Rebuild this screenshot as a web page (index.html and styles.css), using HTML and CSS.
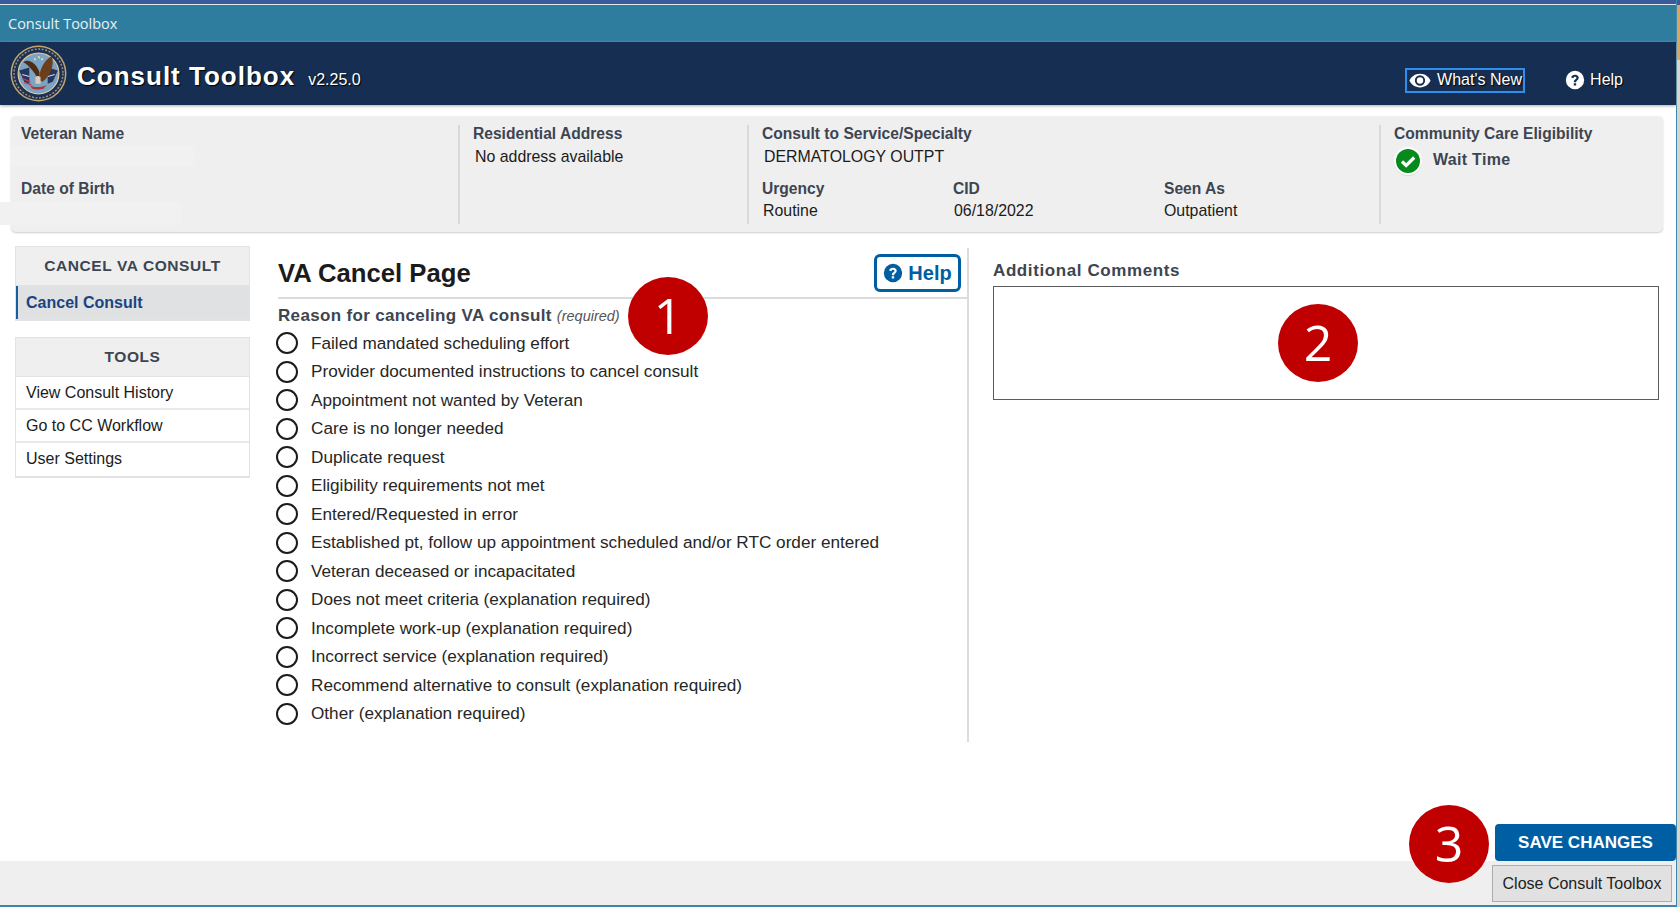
FILE: index.html
```html
<!DOCTYPE html>
<html>
    <head>
        <meta charset="utf-8">
        <meta name="viewport" content="width=device-width, initial-scale=1.0">
        <title>Consult Toolbox</title>
        <link rel="stylesheet" href="styles.css">
    </head>
    <body>
        <div class="shell">
            <div class="window-top"></div>
            <div class="titlebar">Consult Toolbox</div>
            <header class="app-header">
                <svg class="seal" viewBox="0 0 56 56">
                    <circle cx="28" cy="28" r="27.500" fill="#c4a66c"/>
                    <circle cx="28" cy="28" r="26" fill="#1e2f4f"/>
                    <circle cx="28" cy="28" r="24" fill="none" stroke="#8d8f8c" stroke-width="1.500" stroke-dasharray="2 1.500"/>
                    <circle cx="28" cy="28" r="20" fill="#7aa3c4" stroke="#d8c9a4" stroke-width="1.200"/>
                    <path d="M9 25l10 -3v16l-5 -2z" fill="#27365f"/>
                    <path d="M47 25l-10 -3v16l5 -2z" fill="#27365f"/>
                    <path d="M12 33l8 3M14 37l7 2" stroke="#c8384a" stroke-width="1.300"/>
                    <path d="M12 29l7 2M44 29l-7 2" stroke="#d8d8e0" stroke-width="1"/>
                    <path d="M28 34C24 27 19 20 13 17c4 -4 13 0 16 10z" fill="#4f2d14"/>
                    <path d="M28 34c1 -9 5 -19 13 -23c3 8 -1 19 -9 25z" fill="#6b3f1b"/>
                    <path d="M25 32c1 -2 4 -2 5 0v6h-5z" fill="#d8cdb8"/>
                    <path d="M19 39c3 3 13 3 17 0l-3 4c-3 1 -8 1 -11 0z" fill="#b3352f"/>
                    <path d="M24 13l1 2M28 11l1 2M32 13l-1 2" stroke="#f2e6b8" stroke-width="1.400"/>
                </svg>
                <h1 class="app-name">Consult Toolbox</h1>
                <span class="app-version">v2.25.0</span>
                <nav class="header-links">
                    <a class="whats-new">
                        <svg class="eye-icon" viewBox="0 0 24 16">
                            <path fill-rule="evenodd" d="M12 0.5C6.6 0.5 2.4 3.6 0.5 8c1.9 4.4 6.1 7.5 11.5 7.5S21.600 12.400 23.500 8C21.600 3.600 17.400 0.500 12 0.500zM12 13.600A5.600 5.600 0 1 1 12 2.400a5.600 5.600 0 0 1 0 11.200z"/>
                            <circle cx="12" cy="8" r="3.500"/>
                        </svg>
                        What's New
                    </a>
                    <a class="header-help">
                        <svg class="help-icon" viewBox="0 0 24 24">
                            <path fill-rule="evenodd" d="M12 1a11 11 0 1 0 0 22a11 11 0 0 0 0 -22zM13.400 18.600h-2.900v-2.800h2.900zM15.900 11.200c-.7 .9 -1.500 1.400 -2 2c-.4 .5 -.5 1 -.5 1.500h-2.800c0 -1.100 .2 -1.900 .8 -2.600c.6 -.7 1.600 -1.200 2.100 -1.900c.5 -.8 .2 -2.100 -1.400 -2.100c-1.200 0 -1.900 .8 -2.100 1.900l-2.600 -1.100c.5 -1.900 2.200 -3.200 4.700 -3.200c1.700 0 3.100 .7 3.800 1.900c.6 1 .8 2.400 0 3.600z"/>
                        </svg>
                        Help
                    </a>
                </nav>
            </header>

            <section class="info-panel">
                <div class="info-col info-veteran">
                    <div class="info-label">Veteran Name</div>
                    <div class="redacted"></div>
                    <div class="info-label dob-label">Date of Birth</div>
                    <div class="redacted redacted-dob"></div>
                </div>
                <div class="info-col info-address">
                    <div class="info-label">Residential Address</div>
                    <div class="info-value">No address available</div>
                </div>
                <div class="info-col info-consult">
                    <div class="info-label">Consult to Service/Specialty</div>
                    <div class="info-value">DERMATOLOGY OUTPT</div>
                    <div class="consult-grid">
                        <div>
                            <div class="info-label">Urgency</div>
                            <div class="info-value">Routine</div>
                        </div>
                        <div>
                            <div class="info-label">CID</div>
                            <div class="info-value">06/18/2022</div>
                        </div>
                        <div>
                            <div class="info-label">Seen As</div>
                            <div class="info-value seen-value">Outpatient</div>
                        </div>
                    </div>
                </div>
                <div class="info-col info-care">
                    <div class="info-label">Community Care Eligibility</div>
                    <div class="eligibility">
                        <svg class="check-icon" viewBox="0 0 30 30">
                            <circle cx="15" cy="16" r="14" fill="#d9d9d9"/>
                            <circle cx="15" cy="15" r="14" fill="#fff"/>
                            <circle cx="15" cy="15" r="12" fill="#078a1c"/>
                            <path d="M9 15.500l4.200 4l8 -8" fill="none" stroke="#fff" stroke-width="3.200"/>
                        </svg>
                        <span>Wait Time</span>
                    </div>
                </div>
            </section>

            <div class="content">
                <aside class="sidebar">
                    <div class="side-box">
                        <div class="side-title">CANCEL VA CONSULT</div>
                        <a class="side-link active">Cancel Consult</a>
                    </div>
                    <div class="side-box">
                        <div class="side-title">TOOLS</div>
                        <a class="side-link">View Consult History</a>
                        <a class="side-link">Go to CC Workflow</a>
                        <a class="side-link">User Settings</a>
                    </div>
                </aside>

                <main class="cancel-form">
                    <div class="form-head">
                        <h2>VA Cancel Page</h2>
                        <button class="help-btn">
                            <svg class="help-icon" viewBox="0 0 24 24">
                                <path fill-rule="evenodd" d="M12 1a11 11 0 1 0 0 22a11 11 0 0 0 0 -22zM13.400 18.600h-2.900v-2.800h2.900zM15.900 11.200c-.7 .9 -1.500 1.400 -2 2c-.4 .5 -.5 1 -.5 1.500h-2.800c0 -1.100 .2 -1.900 .8 -2.600c.6 -.7 1.600 -1.200 2.100 -1.900c.5 -.8 .2 -2.100 -1.400 -2.100c-1.200 0 -1.900 .8 -2.100 1.900l-2.600 -1.100c.5 -1.900 2.200 -3.200 4.700 -3.200c1.700 0 3.100 .7 3.800 1.900c.6 1 .8 2.400 0 3.600z"/>
                            </svg>
                            Help
                        </button>
                    </div>
                    <div class="reason-title">Reason for canceling VA consult <em>(required)</em></div>
                    <div class="reasons">
                        <label class="reason"><span class="radio"></span>Failed mandated scheduling effort</label>
                        <label class="reason"><span class="radio"></span>Provider documented instructions to cancel consult</label>
                        <label class="reason"><span class="radio"></span>Appointment not wanted by Veteran</label>
                        <label class="reason"><span class="radio"></span>Care is no longer needed</label>
                        <label class="reason"><span class="radio"></span>Duplicate request</label>
                        <label class="reason"><span class="radio"></span>Eligibility requirements not met</label>
                        <label class="reason"><span class="radio"></span>Entered/Requested in error</label>
                        <label class="reason"><span class="radio"></span>Established pt, follow up appointment scheduled and/or RTC order entered</label>
                        <label class="reason"><span class="radio"></span>Veteran deceased or incapacitated</label>
                        <label class="reason"><span class="radio"></span>Does not meet criteria (explanation required)</label>
                        <label class="reason"><span class="radio"></span>Incomplete work-up (explanation required)</label>
                        <label class="reason"><span class="radio"></span>Incorrect service (explanation required)</label>
                        <label class="reason"><span class="radio"></span>Recommend alternative to consult (explanation required)</label>
                        <label class="reason"><span class="radio"></span>Other (explanation required)</label>
                    </div>
                </main>

                <section class="comments">
                    <div class="comments-label">Additional Comments</div>
                    <div class="comments-box"></div>
                </section>
            </div>

            <div class="save-row"><button class="save-btn">SAVE CHANGES</button></div>
            <footer class="footer"><button class="close-btn">Close Consult Toolbox</button></footer>
            <div class="window-bottom"></div>
        </div>
        <div class="window-edge"></div>

        <!-- numbered callouts laid over the screen -->
        <div class="callout callout-1">1</div>
        <div class="callout callout-2">2</div>
        <div class="callout callout-3">3</div>
    </body>
</html>
```

FILE: styles.css
```css
*{
    box-sizing: border-box;
}
html, body{
    height: 100%;
}
body{
    margin: 0;
    display: flex;
    overflow: hidden;
    background: #fff;
    font-family: "Liberation Sans", Arial, sans-serif;
    color: #1b1b1b;
}
.shell{
    width: 1677px;
    height: 907px;
    display: flex;
    flex-direction: column;
    border-right: 1px solid #3f86a8;
}
.window-edge{
    flex: 1;
    background: linear-gradient(#3a5a9b 0 5px, #d9a566 5px 60px, #d6d6d0 60px);
}
.window-top{
    height: 5px;
    background: #3a5a9b;
    border-bottom: 1px solid #dfe6ee;
}
.window-bottom{
    height: 2px;
    margin-top: auto;
    background: #3f86a8;
}

/* title + header */
.titlebar{
    height: 37px;
    line-height: 37px;
    padding-left: 8px;
    background: #2e7d9e;
    color: #e8f1f5;
    font-family: "Open Sans", sans-serif;
    font-size: 14.500px;
}
.app-header{
    height: 63px;
    display: flex;
    align-items: center;
    padding-left: 10px;
    background: #162e51;
    color: #fff;
    box-shadow: 0 1px 3px #aaa;
}
.seal{
    width: 57px;
    height: 57px;
    margin-right: 10px;
}
.app-name{
    margin: 6px 13px 0 0;
    font-size: 26px;
    font-weight: bold;
    letter-spacing: 1px;
    text-shadow: 1px 1px 1px #000;
}
.app-version{
    margin-top: 13px;
    font-size: 16px;
    text-shadow: 1px 1px 1px #000;
}
.header-links{
    margin-left: auto;
    display: flex;
    align-items: center;
    gap: 40px;
    padding-right: 53px;
    padding-top: 14px;
    font-size: 16px;
}
.header-links a{
    display: flex;
    align-items: center;
    text-shadow: 1px 1px 1px #000;
}
.whats-new{
    width: 120px;
    height: 25px;
    padding-left: 2px;
    padding-bottom: 1px;
    gap: 6px;
    border: 2px solid #2e8fee;
    white-space: nowrap;
}
.eye-icon{
    width: 22px;
    height: 15px;
    fill: #fff;
}
.help-icon{
    width: 20px;
    height: 20px;
    fill: #fff;
}
.header-help{
    gap: 5px;
    margin-bottom: 1px;
}

/* veteran info */
.info-panel{
    height: 116px;
    margin: 11px 13px 0 11px;
    padding: 9px 0 8px;
    display: flex;
    background: #efefef;
    border-radius: 5px;
    box-shadow: 0 1px 2px #ccc;
    font-size: 15px;
}
.info-col{
    padding-left: 13px;
    border-left: 2px solid #d9d9d9;
}
.info-veteran{
    width: 447px;
    padding-left: 10px;
    border-left: 0;
}
.info-address{
    width: 289px;
}
.info-consult{
    width: 632px;
}
.info-care{
    flex: 1;
}
.info-label{
    line-height: 18px;
    font-size: 15.600px;
    font-weight: bold;
    color: #3d4551;
    white-space: nowrap;
}
.info-value{
    margin-top: 5px;
    padding-left: 2px;
    line-height: 18px;
    font-size: 15.900px;
    color: #1b1b1b;
}
.consult-grid .info-value{
    margin-top: 4px;
    padding-left: 1px;
}
.consult-grid .seen-value{
    padding-left: 0;
}
.redacted{
    width: 184px;
    height: 20px;
    margin: 3px 0 0 -10px;
    background: #f1f1f1;
}
.dob-label{
    margin-top: 14px;
}
.redacted-dob{
    margin: 4px 0 0 -21px;
    width: 181px;
    height: 23px;
}
.consult-grid{
    display: grid;
    grid-template-columns: 191px 211px 1fr;
    margin-top: 14px;
}
.eligibility{
    display: flex;
    align-items: center;
    gap: 10px;
    margin-top: 3px;
    margin-left: -1px;
    font-size: 16px;
    font-weight: bold;
    color: #3d4551;
    letter-spacing: .3px;
}
.check-icon{
    width: 30px;
    height: 30px;
}
.eligibility span{
    margin-bottom: 2px;
}

/* main area */
.content{
    flex: 1;
    display: flex;
    min-height: 0;
    padding: 14px 0 0 15px;
}
.sidebar{
    width: 235px;
    flex: none;
}
.side-box{
    margin-bottom: 16px;
    border: 1px solid #e3e3e3;
    border-bottom-width: 2px;
}
.side-title{
    height: 39px;
    line-height: 38px;
    text-align: center;
    background: #efefef;
    border-bottom: 1px solid #e3e3e3;
    font-size: 15.500px;
    font-weight: bold;
    letter-spacing: .6px;
    color: #3d4551;
}
.side-link{
    display: block;
    height: 33px;
    line-height: 32px;
    padding-left: 10px;
    border-bottom: 2px solid #e9e9e9;
    font-size: 16px;
}
.side-link:last-child{
    border-bottom: 0;
}
.side-link.active{
    height: 33px;
    padding-left: 8px;
    line-height: 34px;
    background: #dfe1e2;
    border-left: 2px solid #1a5d9e;
    color: #1a4480;
    font-weight: bold;
}
.cancel-form{
    width: 691px;
    height: 494px;
    margin: 2px 0 0 28px;
    border-right: 2px solid #dcdcdc;
}
.form-head{
    height: 51px;
    display: flex;
    justify-content: space-between;
    align-items: flex-end;
    padding-right: 6px;
    border-bottom: 2px solid #dcdcdc;
    padding-bottom: 5px;
}
.form-head h2{
    margin: 0 0 3px;
    font-size: 25.700px;
    line-height: 32px;
    color: #1b1b1b;
}
.help-btn{
    width: 87px;
    height: 38px;
    display: flex;
    align-items: center;
    justify-content: center;
    gap: 5px;
    padding: 0;
    background: #fff;
    border: 3px solid #005ea2;
    border-radius: 6px;
    color: #005ea2;
    font-family: inherit;
    font-size: 20px;
    font-weight: bold;
}
.help-btn .help-icon{
    fill: #005ea2;
}
.reason-title{
    margin-top: 7px;
    line-height: 20px;
    font-size: 17px;
    font-weight: bold;
    letter-spacing: .33px;
    color: #3d4551;
}
.reason-title em{
    font-size: 14.500px;
    font-weight: normal;
    letter-spacing: 0;
    color: #555;
}
.reasons{
    margin-top: 3px;
}
.reason{
    display: flex;
    align-items: center;
    height: 28.500px;
    font-size: 17.160px;
    color: #262626;
}
.radio{
    width: 22px;
    height: 22px;
    margin: 0 13px 0 -2px;
    border: 2px solid #1b1b1b;
    border-radius: 50%;
    flex: none;
    background: #fff;
}
.comments{
    flex: 1;
    margin: 15px 17px 0 24px;
}
.comments-label{
    line-height: 20px;
    font-size: 17px;
    font-weight: bold;
    letter-spacing: .6px;
    color: #3d4551;
}
.comments-box{
    height: 114px;
    margin-top: 5px;
    border: 1px solid #5c5c5c;
}

/* bottom buttons */
.save-row{
    display: flex;
    justify-content: flex-end;
}
.save-btn{
    width: 181px;
    height: 37px;
    background: #005ea2;
    border: 0;
    border-radius: 4px;
    color: #fff;
    font-family: inherit;
    font-size: 17px;
    font-weight: bold;
}
.footer{
    height: 44px;
    display: flex;
    justify-content: flex-end;
    padding: 4px 4px 0 0;
    background: #efefef;
}
.close-btn{
    width: 180px;
    height: 37px;
    background: #e1e1e1;
    border: 1px solid #adadad;
    color: #222;
    font-family: inherit;
    font-size: 16px;
}

/* callouts */
.callout{
    position: absolute;
    width: 80px;
    height: 78px;
    border-radius: 50%;
    background: #c00000;
    color: #fff;
    font-family: "Open Sans", sans-serif;
    font-size: 50px;
    line-height: 76px;
    text-align: center;
}
.callout-1{
    left: 628px;
    top: 277px;
}
.callout-2{
    left: 1278px;
    top: 304px;
}
.callout-3{
    left: 1409px;
    top: 805px;
}
```
